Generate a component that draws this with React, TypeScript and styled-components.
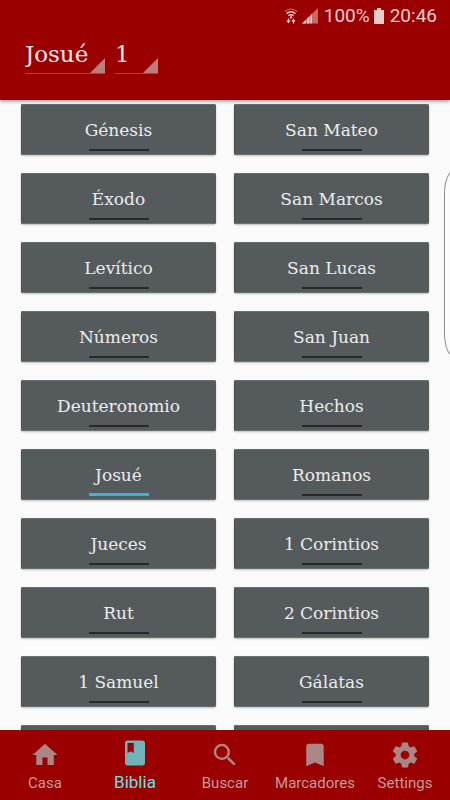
import React, { useState } from "react";
import styled, { createGlobalStyle } from "styled-components";
import { MdHome, MdClass, MdSearch, MdBookmark } from "react-icons/md";

const slab = `"Roboto Slab", "DejaVu Serif", serif`;
const sans = `Roboto, "Liberation Sans", sans-serif`;

const GlobalStyle = createGlobalStyle`
  * { box-sizing: border-box; }
  body { margin: 0; background: #fafafa; }
  button, select { font: inherit; color: inherit; border: 0; padding: 0; background: none; }
`;

const Screen = styled.div`
  position: relative;
  display: flex;
  flex-direction: column;
  height: 100vh;
  overflow: hidden;
  background: #fafafa;
  font-family: ${sans};
`;

const Header = styled.header`
  position: relative;
  z-index: 1;
  flex: none;
  padding-bottom: 26px;
  background: #9a0000;
  box-shadow: 0 1px 4px rgba(0, 0, 0, 0.45);
`;

const StatusBar = styled.div`
  display: flex;
  justify-content: flex-end;
  align-items: center;
  height: 32px;
  padding-right: 13px;
  color: #ebcccc;
  font-size: 19px;
  line-height: 32px;
  svg { display: block; flex: none; }
`;

const WifiIcon = styled.svg`
  margin-right: 4px;
`;

const SignalIcon = styled.svg`
  margin-right: 6px;
`;

const BatteryIcon = styled.svg`
  margin: 0 6px 0 4px;
`;

const Pickers = styled.div`
  display: flex;
  gap: 10px;
  padding: 6px 25px 0;
`;

const Picker = styled.label<{ $width: number }>`
  position: relative;
  width: ${(p) => p.$width}px;
  border-bottom: 1px solid #b43e3e;
  svg { position: absolute; right: 0; bottom: 0; pointer-events: none; }
`;

const Select = styled.select`
  display: block;
  width: 100%;
  height: 35px;
  padding-bottom: 2px;
  appearance: none;
  color: #f5e6e6;
  font-family: ${slab};
  font-size: 23px;
  font-weight: 300;
  line-height: 33px;
  outline: none;
  option { color: #222; }
`;

const Books = styled.main`
  flex: 1;
  min-height: 0;
  overflow: hidden;
  display: grid;
  grid-template-columns: 1fr 1fr;
  grid-auto-rows: 51px;
  gap: 18px;
  padding: 4px 21px 0;
`;

const Book = styled.button<{ $active?: boolean }>`
  display: flex;
  flex-direction: column;
  align-items: center;
  justify-content: flex-end;
  padding-bottom: 4px;
  border-radius: 2px;
  background: #555a5d;
  box-shadow: inset 0 1px 0 #6a6e70, inset 0 -1px 0 #6a6e70, inset 1px 0 0 #474d50, 0 1px 2px rgba(0, 0, 0, 0.25);
  color: #ebecec;
  font-family: ${slab};
  font-size: 17px;
  font-weight: 300;
  line-height: 24px;
  white-space: nowrap;
  cursor: pointer;
  &::after {
    content: "";
    width: 60px;
    height: ${(p) => (p.$active ? 3 : 2)}px;
    margin-top: ${(p) => (p.$active ? 6 : 7)}px;
    background: ${(p) => (p.$active ? "#33b5e5" : "#272a2c")};
  }
`;

const EdgeHandle = styled.div`
  position: absolute;
  z-index: 1;
  right: -14px;
  top: 170px;
  width: 20px;
  height: 187px;
  border: 1px solid #8c8c8c;
  border-radius: 10px / 24px;
  background: #fcfcfc;
`;

const Nav = styled.nav`
  position: relative;
  flex: none;
  display: grid;
  grid-template-columns: repeat(5, 1fr);
  height: 70px;
  background: #9a0000;
`;

const Tab = styled.button<{ $active: boolean }>`
  display: flex;
  flex-direction: column;
  align-items: center;
  padding-top: ${(p) => (p.$active ? 8 : 10)}px;
  color: ${(p) => (p.$active ? "#66e0e6" : "#c49a9a")};
  font-size: ${(p) => (p.$active ? 17 : 15)}px;
  line-height: ${(p) => (p.$active ? 28 : 26)}px;
  white-space: nowrap;
  cursor: pointer;
  svg {
    display: block;
    flex: none;
    color: ${(p) => (p.$active ? "#70b3b8" : "#ac8585")};
  }
`;

const GearIcon = ({ size }: { size: number }) => (
  <svg width={size} height={size} viewBox="0 0 24 24" fill="currentColor" aria-hidden="true">
    <path d="M19.43 12.98c.04-.32.07-.64.07-.98s-.03-.66-.07-.98l2.11-1.65c.19-.15.24-.42.12-.64l-2-3.46c-.12-.22-.39-.3-.61-.22l-2.49 1c-.52-.4-1.08-.73-1.69-.98l-.38-2.65C14.46 2.18 14.25 2 14 2h-4c-.25 0-.46.18-.49.42l-.38 2.65c-.61.25-1.17.59-1.69.98l-2.49-1c-.23-.09-.49 0-.61.22l-2 3.46c-.13.22-.07.49.12.64l2.11 1.65c-.04.32-.07.65-.07.98s.03.66.07.98l-2.11 1.65c-.19.15-.24.42-.12.64l2 3.46c.12.22.39.3.61.22l2.49-1c.52.4 1.08.73 1.69.98l.38 2.65c.03.24.24.42.49.42h4c.25 0 .46-.18.49-.42l.38-2.65c.61-.25 1.17-.59 1.69-.98l2.49 1c.23.09.49 0 .61-.22l2-3.46c.12-.22.07-.49-.12-.64l-2.11-1.65zM12 15.5c-1.93 0-3.5-1.57-3.5-3.5s1.57-3.5 3.5-3.5 3.5 1.57 3.5 3.5-1.57 3.5-3.5 3.5z" />
  </svg>
);

const books = [
  "Génesis", "San Mateo",
  "Éxodo", "San Marcos",
  "Levítico", "San Lucas",
  "Números", "San Juan",
  "Deuteronomio", "Hechos",
  "Josué", "Romanos",
  "Jueces", "1 Corintios",
  "Rut", "2 Corintios",
  "1 Samuel", "Gálatas",
];

const tabs = [
  { label: "Casa", Icon: MdHome },
  { label: "Biblia", Icon: MdClass },
  { label: "Buscar", Icon: MdSearch },
  { label: "Marcadores", Icon: MdBookmark },
  { label: "Settings", Icon: GearIcon },
];

const Corner = () => (
  <svg width="15" height="15" viewBox="0 0 15 15" aria-hidden="true">
    <path d="M15 0V15H0Z" fill="#bd7d7d" />
  </svg>
);

export default function App() {
  const [book, setBook] = useState("Josué");
  const [chapter, setChapter] = useState("1");
  const [tab, setTab] = useState("Biblia");

  return (
    <Screen>
      <GlobalStyle />
      <Header>
        <StatusBar>
          <WifiIcon width="14" height="16" viewBox="0 0 14 16" fill="none" stroke="currentColor" aria-hidden="true">
            <path d="M.8 3.6Q7-1.4 13.2 3.6" strokeWidth="1.3" opacity=".5" />
            <path d="M2.6 5.6Q7 2 11.4 5.6M4.4 7.7Q7 5.6 9.6 7.7" strokeWidth="1.5" />
            <circle cx="7" cy="9.4" r="1.2" fill="currentColor" stroke="none" />
            <path d="M4.5 10.6V13M9.5 15.4V13" strokeWidth="1.3" />
            <path d="M2.4 12.6H6.6L4.500 15.400ZM7.400 13.400L9.500 10.600 11.600 13.400Z" fill="currentColor" stroke="none" />
          </WifiIcon>
          <SignalIcon width="16" height="16" viewBox="0 0 16 16" aria-hidden="true">
            <path d="M0 15.5L16 0V15.5Z" fill="#c26a6a" />
            <path d="M0 15.5L4 11.6V15.5ZM5 15.5V10.6L7.5 8.2V15.5ZM8.5 15.5V7.2L10 5.8V15.5Z" fill="currentColor" />
          </SignalIcon>
          <span>100%</span>
          <BatteryIcon width="10" height="16" viewBox="0 0 10 16" aria-hidden="true">
            <path d="M3 0H7V2H10V16H0V2H3Z" fill="currentColor" />
          </BatteryIcon>
          <span>20:46</span>
        </StatusBar>
        <Pickers>
          <Picker $width={80}>
            <Select aria-label="Libro" value={book} onChange={(e) => setBook(e.target.value)}>
              {books.map((name) => <option key={name}>{name}</option>)}
            </Select>
            <Corner />
          </Picker>
          <Picker $width={43}>
            <Select aria-label="Capítulo" value={chapter} onChange={(e) => setChapter(e.target.value)}>
              {Array.from({ length: 24 }, (_, i) => <option key={i}>{i + 1}</option>)}
            </Select>
            <Corner />
          </Picker>
        </Pickers>
      </Header>
      <Books>
        {books.map((name) => (
          <Book key={name} type="button" $active={name === book} aria-pressed={name === book} onClick={() => setBook(name)}>
            {name}
          </Book>
        ))}
        <Book type="button" aria-label="Más libros" />
        <Book type="button" aria-label="Más libros" />
      </Books>
      <EdgeHandle />
      <Nav>
        {tabs.map(({ label, Icon }) => (
          <Tab key={label} type="button" $active={label === tab} onClick={() => setTab(label)}>
            <Icon size={30} aria-hidden="true" />
            {label}
          </Tab>
        ))}
      </Nav>
    </Screen>
  );
}
